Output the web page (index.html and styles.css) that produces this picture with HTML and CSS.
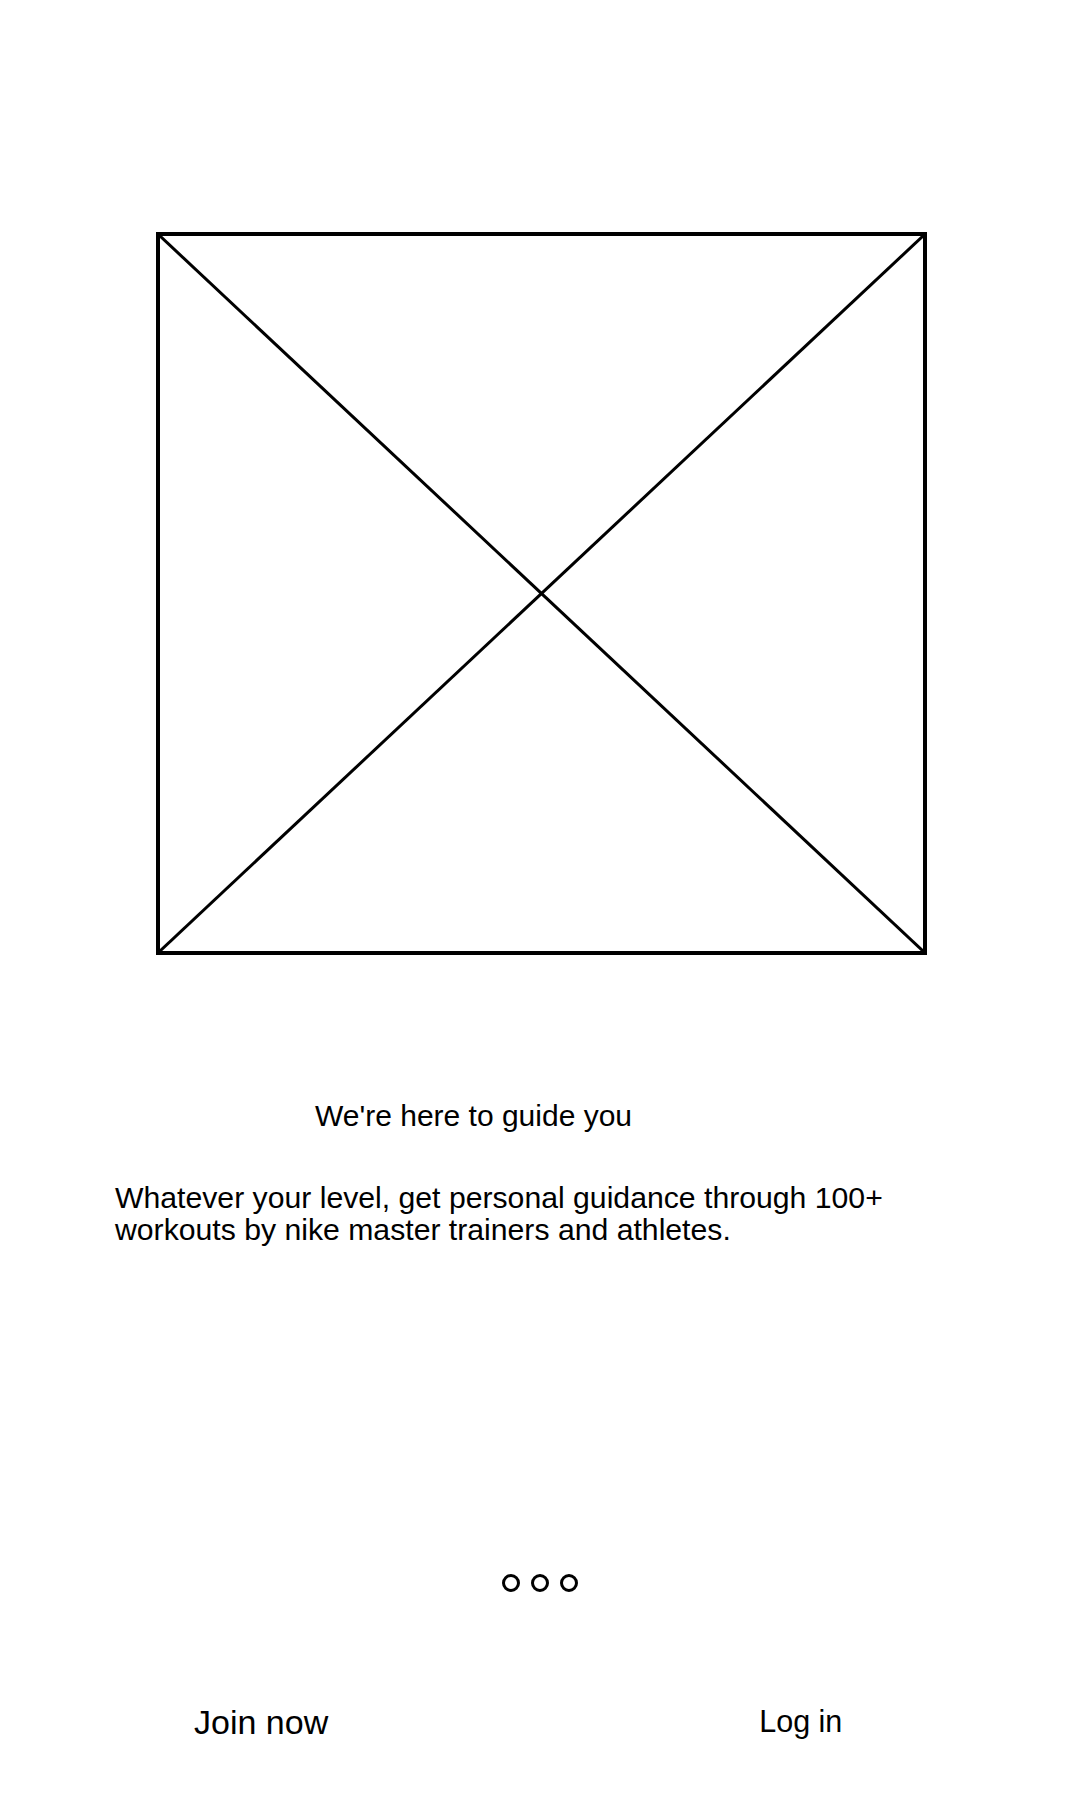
FILE: index.html
```html
<!DOCTYPE html>
<html lang="en">
<head>
<meta charset="utf-8">
<title>Onboarding</title>
<link rel="stylesheet" href="styles.css">
</head>
<body>
<main class="screen">
  <div class="hero">
    <svg class="hero-x" viewBox="0 0 763 715" preserveAspectRatio="none">
      <line x1="0" y1="0" x2="763" y2="715"/>
      <line x1="763" y1="0" x2="0" y2="715"/>
    </svg>
  </div>
  <h1 class="title">We're here to guide you</h1>
  <p class="desc">Whatever your level, get personal guidance through 100+<br>workouts by nike master trainers and athletes.</p>
  <div class="dots">
    <span class="dot"></span><span class="dot"></span><span class="dot"></span>
  </div>
  <div class="actions">
    <span class="join">Join now</span>
    <span class="login">Log in</span>
  </div>
</main>
</body>
</html>
```
FILE: styles.css
```css
html, body {
  margin: 0;
  padding: 0;
  background: #fff;
}
body {
  font-family: "Liberation Sans", Arial, sans-serif;
  color: #000;
}
.screen {
  width: 1080px;
  height: 1800px;
  display: flex;
  flex-direction: column;
}
.hero {
  margin: 232px 0 0 156px;
  width: 771px;
  height: 723px;
  box-sizing: border-box;
  border: 4px solid #000;
}
.hero-x {
  display: block;
  width: 100%;
  height: 100%;
}
.hero-x line {
  stroke: #000;
  stroke-width: 3;
}
.title {
  margin: 144px 0 0 315px;
  font-size: 30px;
  font-weight: normal;
  line-height: 34px;
}
.desc {
  margin: 49px 0 0 115px;
  font-size: 30.2px;
  line-height: 32px;
}
.dots {
  margin-top: 328px;
  display: flex;
  justify-content: center;
  gap: 11px;
}
.dot {
  width: 18px;
  height: 18px;
  box-sizing: border-box;
  border: 3px solid #000;
  border-radius: 50%;
}
.actions {
  margin-top: 110px;
  display: flex;
  align-items: flex-start;
  padding-left: 194px;
  gap: 431px;
}
.join {
  font-size: 34px;
  line-height: 40px;
}
.login {
  margin-top: 2px;
  font-size: 30.5px;
  line-height: 34px;
}
```
